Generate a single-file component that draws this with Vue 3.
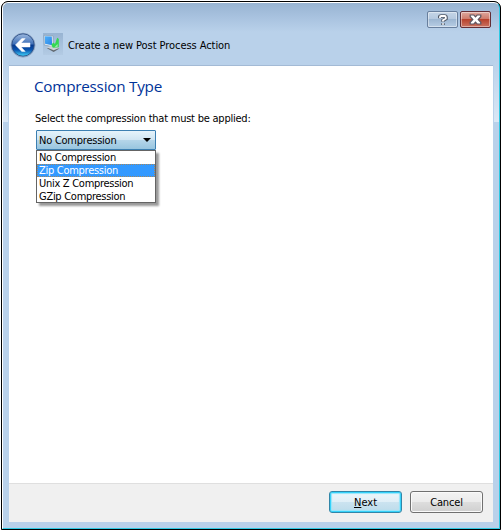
<script setup>
import { ref } from 'vue'
const options = ['No Compression', 'Zip Compression', 'Unix Z Compression', 'GZip Compression']
const selected = ref('No Compression')
const hovered = ref('Zip Compression')
</script>

<template>
  <div class="stage">
    <div class="window">
      <div class="frame">
        <header class="titlebar">
          <div class="controls">
            <button class="ctl" aria-label="Help">
              <svg width="10" height="12" viewBox="0 0 10 12" fill="none">
                <path d="M1.6 4.2V3.2Q1.6 2 3 2H6.6Q8 2 8 3.2V4.6L5 6.4V7.8M5 9.2V11" stroke="#515a68" stroke-width="3.6" />
                <path d="M2 4V3Q2 2 3.2 2H6.6Q7.8 2 7.8 3.2V4.5L5 6.3V7.6M5 9.2V10.8" stroke="#fff" stroke-width="1.8" />
              </svg>
            </button>
            <button class="ctl close" aria-label="Close">
              <svg width="13" height="11" viewBox="0 0 13 11">
                <path d="M1.2 1H4.9L6.5 2.8 8.1 1H11.8V2.7L9.2 5.5 11.8 8.3V10H8.1L6.5 8.2 4.9 10H1.2V8.3L3.8 5.5 1.2 2.7Z" fill="#fff" stroke="#5d5560" stroke-width="1.2" />
              </svg>
            </button>
          </div>
          <div class="caption">
            <svg class="back" width="26" height="26" viewBox="0 0 26 26">
              <defs>
                <linearGradient id="orb" x1="0" y1="0" x2="0" y2="1">
                  <stop offset="0" stop-color="#9cb8de" />
                  <stop offset=".46" stop-color="#3f70b8" />
                  <stop offset=".5" stop-color="#06398e" />
                  <stop offset=".72" stop-color="#0a55b0" />
                  <stop offset="1" stop-color="#42d5fa" />
                </linearGradient>
              </defs>
              <circle cx="13" cy="13.2" r="12" fill="#b5cbe4" stroke="#7f97b8" stroke-width=".7" />
              <circle cx="13" cy="13" r="11.2" fill="url(#orb)" stroke="#2c4f86" stroke-width=".9" />
              <path d="M5.4 13L11.8 6.6H15.2L11.1 11H20V15H11.1L15.2 19.4H11.8Z" fill="#fff" stroke="#fff" stroke-width=".5" />
            </svg>
            <svg class="appicon" width="20" height="22" viewBox="0 0 20 22">
              <defs>
                <linearGradient id="tile" x1="0" y1="0" x2="0" y2="1">
                  <stop offset="0" stop-color="#98b4d2" />
                  <stop offset="1" stop-color="#b3cbe4" />
                </linearGradient>
                <linearGradient id="screen" x1="0" y1="0" x2="1" y2="1">
                  <stop offset="0" stop-color="#4fb0fb" />
                  <stop offset="1" stop-color="#2b86e4" />
                </linearGradient>
              </defs>
              <rect width="20" height="22" fill="url(#tile)" />
              <path d="M1 2.3L10 2.8 10.3 13.8 1.3 12Z" fill="#e4eef6" stroke="#71879c" stroke-width=".5" />
              <path d="M1.8 3.2L8.8 3.5 9.1 12.2 2 10.8Z" fill="url(#screen)" />
              <path d="M4 15.2L8 13.5 16.5 15.6 10.6 19Z" fill="#626a72" />
              <path d="M4 14.6L8 13 16.3 14.9 10.6 17.2Z" fill="#cfd3d6" />
              <path d="M8.3 11.6L10.6 9.4 12 11 14.2 4.8 15.8 6V14.2L9.8 14.8Z" fill="#35d852" />
              <path d="M11.8 14.1L14.6 11V13.8Z" fill="#a4eeb0" />
            </svg>
            <span class="title">Create a new Post Process Action</span>
          </div>
        </header>
        <main class="page">
          <section class="body">
            <h1>Compression Type</h1>
            <p class="label">Select the compression that must be applied:</p>
            <div class="combo">
              <div class="combo-box">
                <span class="t-selected">{{ selected }}</span>
                <svg width="8" height="4" viewBox="0 0 8 4"><path d="M0 0H8L4 4Z" fill="#000" /></svg>
              </div>
              <ul class="list">
                <li v-for="o in options" :key="o" :class="{ hot: o === hovered }" @mouseenter="hovered = o" @click="selected = o"><span>{{ o }}</span></li>
              </ul>
            </div>
          </section>
          <footer class="footer">
            <button class="btn primary"><span><u>N</u>ext</span></button>
            <button class="btn"><span>Cancel</span></button>
          </footer>
        </main>
      </div>
    </div>
  </div>
</template>

<style>
body { background: #fff; overflow: hidden; }
</style>

<style scoped>
* { box-sizing: border-box; }
.stage {
  width: 502px; height: 531px; padding: 1px;
  font: 11px/13px "DejaVu Sans Condensed", "DejaVu Sans", sans-serif;
  font-stretch: condensed; color: #000; background: #fff;
}
.window {
  width: 500px; height: 529px; border: 1px solid #000;
  border-radius: 7px 7px 0 0; background: #000;
}
.frame {
  width: 498px; height: 527px; padding: 0 5px 6px 6px;
  border: 1px solid #fff; border-right-color: #2fc9e3; border-bottom-color: #2fc9e3;
  border-radius: 6px 6px 0 0; display: flex; flex-direction: column;
  background:
    linear-gradient(#b9d1ea, #dae7f5) left 57px / 5px 62px no-repeat,
    linear-gradient(#b9d1ea, #dae7f5) right 57px / 5px 62px no-repeat,
    linear-gradient(#98b4d2 0, #a8c2df 14px, #b9d1ea 29px, #b9d1ea 100%);
}
.titlebar { height: 62px; flex: none; padding-top: 8px; }
.controls { display: flex; justify-content: flex-end; gap: 2px; padding-right: 3px; height: 17px; }
button { font: inherit; color: inherit; margin: 0; padding: 0; }
.ctl {
  width: 31px; height: 17px; border: 1px solid #687f9d; border-radius: 2px;
  display: flex; align-items: center; justify-content: center;
  background: linear-gradient(#c4d5e7 0, #b5c9df 46%, #9db7d2 50%, #b7cde4 100%);
  box-shadow: inset 0 0 0 1px rgba(255,255,255,.42);
}
.ctl.close {
  border-color: #642d35;
  background: linear-gradient(#dea89e 0, #cf7b6b 46%, #b8422d 50%, #cb7361 100%);
}
.caption { display: flex; align-items: center; height: 26px; margin-top: 4px; padding-left: 1px; }
.appicon { margin-left: 7px; margin-top: -2px; }
.title { margin-left: 5px; margin-top: 1px; white-space: nowrap; letter-spacing: -.06px; }
.page {
  flex: 1; display: flex; flex-direction: column; background: #fff;
  border-top: 1px solid #a3bad5; margin: 0 1px 0 0;
}
.body { flex: 1; padding: 9px 0 0 25px; }
h1 {
  margin: 0; font: 400 15.25px/22px "Open Sans", "Noto Sans", sans-serif;
  font-stretch: normal; color: #039; white-space: nowrap; letter-spacing: -.24px;
}
.label { margin: 15px 0 0 1px; white-space: nowrap; letter-spacing: -.23px; }
.combo { width: 120px; margin: 5px 0 0 2px; position: relative; letter-spacing: -.28px; }
.combo-box {
  height: 20px; border: 1px solid #3c7fb1; border-radius: 1px;
  display: flex; align-items: center; justify-content: space-between; padding: 0 4px 0 2px;
  background: linear-gradient(#e5f3fb 0, #d0e5f2 48%, #b4d5e9 52%, #98c5df 100%);
}
.t-selected { letter-spacing: -.24px; }
.list {
  list-style: none; margin: 0; padding: 0; border: 1px solid #646464;
  width: 120px; height: 53px; background: #fff; box-shadow: 3px 3px 2px rgba(0,0,0,.4);
}
.list li { height: 13px; line-height: 13px; padding-left: 2px; white-space: nowrap; }
.list li.hot { background: #39f; color: #fff; outline: 1px dotted #a3875f; outline-offset: -1px; }
.footer {
  height: 39px; flex: none; background: #f0f0f0; border-top: 1px solid #dfdfdf;
  display: flex; justify-content: flex-end; gap: 8px; padding: 7px 10px 0 0;
}
.btn {
  width: 73px; height: 22px; border: 1px solid #707070; border-radius: 3px;
  background: linear-gradient(#f3f3f3 0, #ebebeb 48%, #dddddd 52%, #cfcfcf 100%);
  box-shadow: inset 0 0 0 1px #fafafa; letter-spacing: -.16px;
}
.primary {
  border-color: #3186a8; letter-spacing: 0;
  background: linear-gradient(#eef6fa 0, #e0eff7 48%, #cbe3f0 52%, #bcdbea 100%);
  box-shadow: inset 0 0 0 1px #35d2fa, inset 0 0 1px 2px #96e6fb;
}
</style>
